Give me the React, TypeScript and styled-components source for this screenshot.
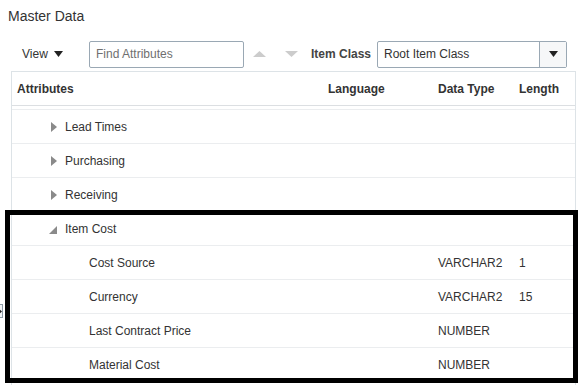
import React from "react";
import styled, { createGlobalStyle } from "styled-components";

const Global = createGlobalStyle`
  html, body { margin: 0; padding: 0; background: #fff; }
  body { font-family: "Liberation Sans", Arial, sans-serif; color: #333; }
`;

const Page = styled.div`
  position: relative;
  width: 583px;
  height: 385px;
  overflow: hidden;
  background: #fff;
`;

const Title = styled.div`
  padding: 8px 0 0 8px;
  font-size: 14px;
  line-height: 17px;
  height: 17px;
  color: #333;
`;

const Toolbar = styled.div`
  display: flex;
  align-items: center;
  height: 28px;
  margin-top: 15px;
  padding-left: 22px;
  font-size: 12px;
`;

const ViewMenu = styled.div`
  display: flex;
  align-items: center;
  gap: 6px;
  width: 67px;
  color: #333;
`;

const SearchInput = styled.div`
  box-sizing: border-box;
  width: 155px;
  height: 27px;
  border: 1px solid #9aa8b4;
  border-radius: 2px;
  display: flex;
  align-items: center;
  padding-left: 6px;
  color: #6f6f6f;
  font-size: 12px;
`;

const NavArrows = styled.div`
  display: flex;
  align-items: center;
  gap: 19px;
  margin-left: 9px;
  width: 58px;
`;

const Label = styled.div`
  font-weight: bold;
  width: 66px;
  color: #444;
`;

const Select = styled.div`
  box-sizing: border-box;
  width: 190px;
  height: 27px;
  border: 1px solid #9aa8b4;
  border-radius: 2px;
  display: flex;
  align-items: stretch;
`;

const SelectValue = styled.div`
  flex: 1;
  display: flex;
  align-items: center;
  padding-left: 6px;
  color: #333;
`;

const SelectButton = styled.div`
  width: 26px;
  border-left: 1px solid #9aa8b4;
  background: #f6f7f8;
  display: flex;
  align-items: center;
  justify-content: center;
`;

const Table = styled.div`
  margin-top: 3px;
  margin-left: 11px;
  width: 565px;
  box-sizing: border-box;
  border: 1px solid #dde3e7;
  border-bottom: none;
  height: 314px;
  font-size: 12px;
`;

const cols = "310px 110px 81px 62px";

const HeaderRow = styled.div`
  display: grid;
  grid-template-columns: ${cols};
  height: 33px;
  border-bottom: 1px solid #dcdfe2;
  font-weight: bold;
  color: #333;
`;

const Spacer = styled.div`
  height: 3px;
  border-bottom: 1px solid #ebedef;
`;

const HeadCell = styled.div<{ $pad?: number }>`
  display: flex;
  align-items: center;
  padding-left: ${(p) => p.$pad ?? 6}px;
`;

const Row = styled.div`
  display: grid;
  grid-template-columns: ${cols};
  height: 33px;
  border-bottom: 1px solid #ebedef;
`;

const Cell = styled.div<{ $pad?: number }>`
  display: flex;
  align-items: center;
  padding-left: ${(p) => p.$pad ?? 6}px;
  white-space: nowrap;
`;

const Toggle = styled.span`
  display: inline-flex;
  width: 6px;
  margin-right: 8px;
  justify-content: flex-end;
`;

const Highlight = styled.div`
  position: absolute;
  left: 5px;
  top: 210px;
  width: 573px;
  height: 173px;
  box-sizing: border-box;
  border: 5px solid #000;
  pointer-events: none;
`;

const Splitter = styled.div`
  position: absolute;
  left: -7px;
  top: 304px;
  width: 10px;
  height: 14px;
  box-sizing: border-box;
  border: 1px solid #8d9aa5;
  background: #f2f4f6;
  display: flex;
  align-items: center;
  justify-content: flex-end;
`;

const Down = ({ color = "#222" }: { color?: string }) => (
  <svg width="9" height="6" viewBox="0 0 9 6">
    <path d="M0 0 L9 0 L4.5 6 Z" fill={color} />
  </svg>
);

const Up = ({ color = "#ccc" }: { color?: string }) => (
  <svg width="13" height="6" viewBox="0 0 13 6">
    <path d="M0 6 L13 6 L6.5 0 Z" fill={color} />
  </svg>
);

const Collapsed = () => (
  <svg width="6" height="10" viewBox="0 0 6 10">
    <path d="M0 0 L6 5 L0 10 Z" fill="#8a8a8a" />
  </svg>
);

const Expanded = () => (
  <svg width="8" height="8" viewBox="0 0 8 8" style={{ marginTop: 2, flexShrink: 0 }}>
    <path d="M8 0 L8 8 L0 8 Z" fill="#8a8a8a" />
  </svg>
);

type R = { name: string; level: 1 | 2; open?: boolean; type?: string; len?: string };

const rows: R[] = [
  { name: "Lead Times", level: 1 },
  { name: "Purchasing", level: 1 },
  { name: "Receiving", level: 1 },
  { name: "Item Cost", level: 1, open: true },
  { name: "Cost Source", level: 2, type: "VARCHAR2", len: "1" },
  { name: "Currency", level: 2, type: "VARCHAR2", len: "15" },
  { name: "Last Contract Price", level: 2, type: "NUMBER" },
  { name: "Material Cost", level: 2, type: "NUMBER" },
];

export default function App() {
  return (
    <Page>
      <Global />
      <Title>Master Data</Title>
      <Toolbar>
        <ViewMenu>
          View <Down />
        </ViewMenu>
        <SearchInput>Find Attributes</SearchInput>
        <NavArrows>
          <Up />
          <svg width="13" height="6" viewBox="0 0 13 6">
            <path d="M0 0 L13 0 L6.5 6 Z" fill="#ccc" />
          </svg>
        </NavArrows>
        <Label>Item Class</Label>
        <Select>
          <SelectValue>Root Item Class</SelectValue>
          <SelectButton>
            <Down />
          </SelectButton>
        </Select>
      </Toolbar>
      <Table>
        <HeaderRow>
          <HeadCell $pad={5}>Attributes</HeadCell>
          <HeadCell>Language</HeadCell>
          <HeadCell>Data Type</HeadCell>
          <HeadCell>Length</HeadCell>
        </HeaderRow>
        <Spacer />
        {rows.map((r) => (
          <Row key={r.name}>
            <Cell $pad={r.level === 1 ? 39 : 77}>
              {r.level === 1 && <Toggle>{r.open ? <Expanded /> : <Collapsed />}</Toggle>}
              {r.name}
            </Cell>
            <Cell />
            <Cell>{r.type ?? ""}</Cell>
            <Cell>{r.len ?? ""}</Cell>
          </Row>
        ))}
      </Table>
      <Splitter>
        <svg width="3" height="5" viewBox="0 0 3 5">
          <path d="M0 0 L3 2.5 L0 5 Z" fill="#222" />
        </svg>
      </Splitter>
      <Highlight />
    </Page>
  );
}
